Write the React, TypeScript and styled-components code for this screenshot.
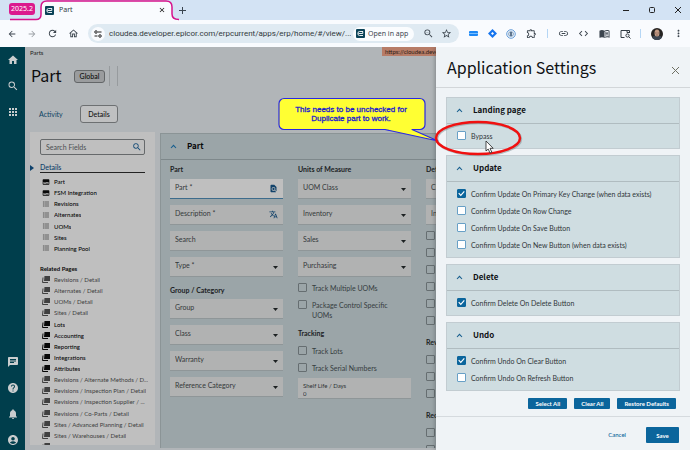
import React from "react";
import styled, { createGlobalStyle, css } from "styled-components";
import {
  MdAccountCircle, MdApps, MdArrowBack, MdArrowForward, MdChat, MdClose, MdCode,
  MdFindInPage, MdFormatListBulleted, MdHelp, MdHome, MdLink, MdMoreVert,
  MdNotifications, MdOutlineExtension, MdOutlineHome, MdRefresh, MdSearch,
  MdStarOutline, MdSubtitles, MdTranslate, MdZoomOut, MdOutlineMenuBook,
} from "react-icons/md";

const uiFont = 'Lato, "Noto Sans", sans-serif';
const headFont = '"Noto Sans CJK SC", "Noto Sans", sans-serif';
const chromeFont = '"Noto Sans", "Open Sans", sans-serif';

const GlobalStyle = createGlobalStyle`
  * { box-sizing: border-box; }
  body { margin: 0; font: 7px/10px ${uiFont}; color: #222; overflow: hidden; }
  button, input, select { font: inherit; color: inherit; margin: 0; padding: 0; border: 0; background: none; border-radius: 0; }
  h1, h2, h3, ul { margin: 0; padding: 0; font: inherit; }
  ul { list-style: none; }
  a { color: inherit; text-decoration: none; }
  svg { display: block; flex: none; }
`;

const Page = styled.div`
  height: 100vh;
  display: flex;
  flex-direction: column;
  overflow: hidden;
`;

/* ---------- browser chrome ---------- */

const TabStrip = styled.header`
  height: 20px;
  flex: none;
  display: flex;
  align-items: center;
  background: #d3e3f4;
  padding-left: 9px;
  font-family: ${chromeFont};
  position: relative;
`;

const TabGroup = styled.span`
  width: 26px;
  height: 12px;
  margin-bottom: 2px;
  border-radius: 3px;
  background: #db1a8e;
  color: #fff;
  font-size: 7px;
  line-height: 11px;
  text-align: center;
  position: relative;
`;

const TabOutline = styled.svg`
  position: absolute;
  left: 9px;
  top: 0;
`;

const BrowserTab = styled.div`
  width: 121px;
  margin-left: 10px;
  display: flex;
  align-items: center;
  gap: 5px;
  position: relative;
  font-size: 7px;
  color: #33383d;
`;

const GhostButton = styled.button`
  display: grid;
  place-items: center;
  color: inherit;
`;

const TabClose = styled(GhostButton)`
  margin-left: auto;
  color: #111;
`;

const NewTab = styled(GhostButton)`
  margin-left: 13px;
  color: #3a4550;
`;

const WindowButtons = styled.div`
  margin-left: auto;
  display: flex;
  gap: 18px;
  padding-right: 8px;
  color: #222;
`;

const Toolbar = styled.div`
  height: 27px;
  flex: none;
  display: flex;
  align-items: center;
  background: #f9fbfe;
  color: #3c454e;
  font-family: ${chromeFont};
  padding: 0 6px 0 7px;
`;

const NavButtons = styled.div`
  display: flex;
  gap: 10px;
  align-items: center;
`;

const AddressBar = styled.div`
  flex: 1;
  min-width: 0;
  height: 19px;
  margin-left: 9px;
  border-radius: 10px;
  background: #dfeaf2;
  display: flex;
  align-items: center;
  padding: 0 7px 0 3px;
`;

const SiteInfo = styled(GhostButton)`
  width: 14px;
  height: 14px;
  border-radius: 50%;
  background: #f9fbfe;
  flex: none;
`;

const Url = styled.input`
  flex: 1;
  min-width: 0;
  margin: 0 2px 0 4px;
  font-family: Roboto, sans-serif;
  font-size: 8px;
  line-height: 14px;
  color: #333a40;
  outline: none;
`;

const OpenInApp = styled.button`
  height: 14px;
  width: 61px;
  flex: none;
  border-radius: 7px;
  background: #fafcfe;
  display: flex;
  align-items: center;
  gap: 3px;
  padding-left: 3px;
  font-size: 7px;
  white-space: nowrap;
  margin-right: 9px;
`;

const BarIcons = styled.div`
  display: flex;
  gap: 7px;
`;

const Extensions = styled.div`
  width: 225px;
  display: flex;
  align-items: center;
  justify-content: space-between;
  padding-left: 10px;
`;

const Divider = styled.i`
  width: 1px;
  height: 9px;
  background: #b5d6f5;
`;

/* ---------- application ---------- */

const AppFrame = styled.div`
  flex: 1;
  min-height: 0;
  display: flex;
  position: relative;
  background: #b1b5b8;
`;

const Rail = styled.nav`
  width: 25px;
  flex: none;
  background: #003e4c;
  color: #c9cdce;
  display: flex;
  flex-direction: column;
  align-items: center;
  justify-content: space-between;
  padding: 7px 0 4px;
`;

const RailGroup = styled.div`
  display: flex;
  flex-direction: column;
  gap: 14px;
`;

const Main = styled.main`
  flex: 1;
  min-width: 0;
  display: flex;
  flex-direction: column;
  padding: 0 0 2px 5px;
`;

const Crumbs = styled.div`
  display: flex;
  height: 12px;
  font-size: 6px;
  line-height: 11px;
`;

const Server = styled.a`
  margin: 0 200px 0 auto;
  height: 9px;
  width: 108px;
  padding-left: 3px;
  background: #b77c67;
  color: #2b1c16;
  line-height: 9px;
  font-size: 6px;
  font-family: ${uiFont};
`;

const TitleRow = styled.div`
  display: flex;
  align-items: center;
  height: 34px;
  color: #0c0c0c;
`;

const PageTitle = styled.h1`
  width: 44px;
  padding: 0 0 3px 1px;
  font-family: ${headFont};
  font-size: 16px;
  line-height: 24px;
`;

const Badge = styled.span`
  height: 13px;
  width: 31px;
  border: 1px solid #636668;
  border-radius: 3px;
  background: #9a9c9e;
  text-align: center;
  line-height: 11px;
  font-weight: 500;
  margin-right: 4px;
`;

const Rule = styled.i`
  height: 20px;
  width: 1px;
  margin-right: 7px;
  background: #979b9e;
`;

const Tabs = styled.div`
  height: 39px;
  display: flex;
  align-items: center;
  padding: 2px 0 0 9px;
  gap: 18px;
`;

const TabButton = styled.button<{ $on?: boolean }>`
  height: 18px;
  ${({ $on }) =>
    $on
      ? css`
          width: 38px;
          border: 1px solid #6d7072;
          border-radius: 3px;
          background: #bfc0c1;
          color: #111;
          font-weight: 500;
        `
      : css`
          width: 23px;
          color: #0d4463;
        `}
`;

const Workspace = styled.div`
  flex: 1;
  min-height: 0;
  display: flex;
  gap: 5px;
`;

const Tree = styled.aside`
  width: 125px;
  flex: none;
  margin-bottom: 3px;
  background: #bfbfbf;
  padding: 7px 10px 0;
  display: flex;
  flex-direction: column;
  overflow: hidden;
`;

const SearchBox = styled.label`
  height: 16px;
  flex: none;
  border: 1px solid #66696b;
  border-radius: 2px;
  display: flex;
  align-items: center;
  padding: 0 2px 0 5px;
  color: #134a76;
`;

const SearchInput = styled.input`
  flex: 1;
  min-width: 0;
  outline: none;
  &::placeholder { color: #4c4f51; opacity: 1; }
`;

const TreeHead = styled.h2`
  height: 18px;
  flex: none;
  margin: 0 0 3px -10px;
  display: flex;
  gap: 6px;
  align-items: center;
  color: #0e416b;
  font-weight: 500;
  span {
    flex: 1;
    height: 18px;
    padding-top: 7px;
    border-bottom: 1px solid #222;
  }
  svg { margin-top: 7px; }
`;

const TreeList = styled.ul<{ $fill?: boolean }>`
  display: flex;
  flex-direction: column;
  justify-content: space-between;
  height: 78px;
  flex: none;
  margin-right: -6px;
  ${({ $fill }) => $fill && css`flex: 1; height: auto; margin-bottom: -7px;`}
`;

const TreeRow = styled.li<{ $dim?: boolean }>`
  height: 11px;
  flex: none;
  line-height: 11px;
  font-size: 6px;
  font-weight: ${({ $dim }) => ($dim ? 400 : 500)};
  color: ${({ $dim }) => ($dim ? "#404040" : "#080808")};
  a {
    display: flex;
    align-items: center;
    gap: 4px;
    padding-left: 2px;
  }
  span {
    overflow: hidden;
    white-space: nowrap;
    text-overflow: ellipsis;
  }
`;

const Related = styled.h3`
  font-size: 6px;
  line-height: 10px;
  flex: none;
  font-weight: 700;
  color: #080808;
  margin: 10px 0 0;
`;

const Panel = styled.section`
  flex: 1;
  min-width: 0;
  margin-top: 1px;
  border: 1px solid #8b9496;
  border-width: 1px 0 0 1px;
  background: #9ba5a8;
  overflow: hidden;
`;

const PanelHead = styled.h2`
  height: 26px;
  border-bottom: 1px solid #7e888b;
  display: flex;
  align-items: center;
  gap: 10px;
  padding: 0 0 1px 9px;
  font-family: ${headFont};
  font-size: 8px;
  line-height: 12px;
  font-weight: 700;
  color: #0a0a0a;
`;

const Columns = styled.div`
  display: flex;
  gap: 15px;
  padding-left: 9px;
`;

const Column = styled.div`
  width: 113px;
  flex: none;
`;

const FieldHead = styled.h3<{ $tall?: boolean }>`
  height: ${({ $tall }) => ($tall ? 22 : 19)}px;
  padding-top: ${({ $tall }) => ($tall ? 8 : 4)}px;
  font-weight: 700;
  color: #1c2224;
  white-space: nowrap;
`;

const Stack = styled.div`
  display: flex;
  flex-direction: column;
  gap: 6px;
`;

const CheckGroup = styled.div`
  padding: 2px 20px 0 0;
`;

const FieldBox = styled.label<{ $focus?: boolean }>`
  position: relative;
  display: block;
  height: 20px;
  background: ${({ $focus }) => ($focus ? "#bfbfbf" : "#b1b2b2")};
  border-bottom: 1px solid ${({ $focus }) => ($focus ? "#3e6c8c" : "#8f9698")};
  input, select {
    appearance: none;
    display: block;
    width: 100%;
    height: 19px;
    padding: 0 5px 4px;
    outline: none;
    color: #34383a;
    opacity: 1;
  }
  input::placeholder { color: #34383a; opacity: 1; }
  svg {
    position: absolute;
    right: 5px;
    top: 5px;
    color: #12426a;
    pointer-events: none;
  }
`;

const NumberBox = styled.label`
  display: block;
  height: 21px;
  margin-top: 2px;
  padding: 4px 5px 0;
  background: #b1b2b2;
  border-bottom: 1px solid #8f9698;
  font-size: 6px;
  line-height: 8px;
  color: #2f3335;
  input {
    display: block;
    width: 100%;
    height: 8px;
  }
`;

const Check = styled.label<{ $dim?: boolean; $top?: boolean }>`
  display: flex;
  align-items: ${({ $top }) => ($top ? "flex-start" : "center")};
  gap: 5px;
  min-height: 17px;
  padding-top: ${({ $top }) => ($top ? 4 : 0)}px;
  color: ${({ $dim }) => ($dim ? "#363d3f" : "#30363a")};
  input {
    appearance: none;
    flex: none;
    width: 9px;
    height: 9px;
    border: 1px solid ${({ $dim }) => ($dim ? "#666e71" : "#68a0c6")};
    border-radius: 1px;
    background: ${({ $dim }) => ($dim ? "transparent" : "#fff")};
  }
  input:checked {
    border-color: #0b659c;
    background: #0b659c;
  }
  input:checked::before {
    content: "";
    display: block;
    width: 7px;
    height: 7px;
    background: #fff;
    clip-path: polygon(4% 50%, 16% 38%, 40% 64%, 84% 14%, 96% 26%, 40% 88%);
  }
`;

/* ---------- settings drawer ---------- */

const Drawer = styled.aside`
  position: absolute;
  top: 0;
  right: 0;
  bottom: 0;
  width: 254px;
  display: flex;
  flex-direction: column;
  background: #eff3f6;
  box-shadow: -1px 0 4px rgba(60, 65, 70, 0.4);
  clip-path: inset(0 0 0 -6px);
`;

const DrawerHead = styled.header`
  height: 41px;
  flex: none;
  border-bottom: 1px solid #d2d6d9;
  display: flex;
  align-items: center;
  justify-content: space-between;
  padding: 0 10px 0 11px;
  h1 {
    padding-bottom: 1px;
    font-family: ${headFont};
    font-size: 16px;
    line-height: 24px;
    color: #101214;
    white-space: nowrap;
  }
  button { margin-top: 6px; }
`;

const DrawerBody = styled.div`
  flex: 1;
  min-height: 0;
  overflow: hidden;
  padding: 9px 10px 0;
  display: flex;
  flex-direction: column;
  gap: 6px;
`;

const Card = styled.section`
  border: 1px solid #c2ccd1;
  background: #cfdde1;
  flex: none;
`;

const CardHead = styled.h2`
  height: 26px;
  border-bottom: 1px solid #b0bcc0;
  display: flex;
  align-items: center;
  gap: 10px;
  padding: 0 0 1px 9px;
  font-family: ${headFont};
  font-size: 8px;
  line-height: 12px;
  font-weight: 700;
  color: #101214;
`;

const CardBody = styled.div`
  padding: 3px 10px 4px;
`;

const Actions = styled.div`
  display: flex;
  justify-content: flex-end;
  gap: 7px;
  padding: 1px 4px 0 0;
`;

const Small = styled.button`
  height: 11px;
  padding: 0 7px;
  border-radius: 1px;
  background: #0b659c;
  color: #fff;
  font-size: 6px;
  line-height: 11px;
  font-weight: 700;
`;

const DrawerFoot = styled.footer`
  height: 34px;
  flex: none;
  border-top: 1px solid #d5dade;
  display: flex;
  align-items: center;
  justify-content: flex-end;
  gap: 20px;
  padding: 3px 11px 0 0;
  font-size: 6px;
`;

const Cancel = styled.button`
  color: #0b659c;
  font-weight: 500;
`;

const Save = styled(Small)`
  width: 33px;
  height: 16px;
  padding: 0;
`;

/* ---------- notes drawn over the page ---------- */

const Notes = styled.div`
  position: absolute;
  top: 48px;
  right: 165px;
  width: 250px;
  height: 64px;
  pointer-events: none;
  svg { position: absolute; inset: 0; }
`;

const NoteText = styled.p`
  position: absolute;
  left: 3px;
  top: 10px;
  width: 146px;
  margin: 0;
  text-align: center;
  color: #1b1bd0;
  font: 8px/9px "Liberation Sans", Arial, sans-serif;
  -webkit-text-stroke: 0.3px #1b1bd0;
`;

/* ---------- drawings ---------- */

const AppLogo = () => (
  <svg width="9" height="9" viewBox="0 0 18 18">
    <rect width="18" height="18" rx="2" fill="#0b4358" />
    <path d="M14 5H7a3 3 0 0 0-3 3v2a3 3 0 0 0 3 3h7M5 9h8.500V5" fill="none" stroke="#fff" strokeWidth="1.800" />
  </svg>
);

const Chevron = () => (
  <svg width="7" height="7" viewBox="0 0 7 7">
    <path d="M1 5 3.500 2.300 6 5" fill="none" stroke="#175e8e" strokeWidth="1.100" />
  </svg>
);

const Arrow = () => (
  <svg width="5" height="12" viewBox="0 0 5 12">
    <path d="M0 4h5L2.500 7z" fill="#1d2122" />
  </svg>
);

const PagesIcon = () => (
  <svg width="8" height="7" viewBox="0 0 16 14">
    <path d="M5 0h11v10H4z" fill="currentColor" />
    <path d="M2 3 1 13h11" fill="none" stroke="currentColor" strokeWidth="2" />
  </svg>
);

const TuneIcon = () => (
  <svg width="8" height="8" viewBox="0 0 16 16" fill="none" stroke="#222" strokeWidth="2">
    <circle cx="4" cy="4" r="2.500" /><path d="M8 4h7M1 12h6" /><circle cx="12" cy="12" r="2.500" />
  </svg>
);

const TabSearchIcon = () => (
  <svg width="11" height="10" viewBox="0 0 22 20" fill="none" stroke="#333c44" strokeWidth="2">
    <path d="M9 17H2V3h17v5M14 3v4h5" /><circle cx="15" cy="13" r="3.200" /><path d="m17.500 15.500 3.500 3.500" />
  </svg>
);

const Avatar = () => (
  <svg width="12" height="12" viewBox="0 0 24 24">
    <circle cx="12" cy="12" r="12" fill="#262322" />
    <path d="M2 19c3-4 6-4 10-4s7 0 10 4a12 12 0 0 1-20 0" fill="#3c4653" />
    <ellipse cx="12" cy="10" rx="5" ry="7" fill="#c39b86" />
    <path d="M8 10h3m2 0h3M10 14h4" stroke="#5b3f35" />
  </svg>
);

/* ---------- pieces ---------- */

function SelectField({ label }: { label: string }) {
  return (
    <FieldBox>
      <select aria-label={label}><option>{label}</option></select>
      <Arrow />
    </FieldBox>
  );
}

function TextField({ label, focus, icon }: { label: string; focus?: boolean; icon?: React.ReactNode }) {
  return (
    <FieldBox $focus={focus}>
      <input type="text" aria-label={label} placeholder={label} />
      {icon}
    </FieldBox>
  );
}

function SettingsCard({ title, items }: { title: string; items: [string, boolean][] }) {
  return (
    <Card>
      <CardHead><Chevron />{title}</CardHead>
      <CardBody>
        {items.map(([text, on]) => (
          <Check key={text}><input type="checkbox" defaultChecked={on} />{text}</Check>
        ))}
      </CardBody>
    </Card>
  );
}

const detailRows = ["Part", "FSM Integration", "Revisions", "Alternates", "UOMs", "Sites", "Planning Pool"];

const relatedRows: [string, boolean][] = [
  ["Revisions / Detail", true], ["Alternates / Detail", true], ["UOMs / Detail", true],
  ["Sites / Detail", true], ["Lots", false], ["Accounting", false], ["Reporting", false],
  ["Integrations", false], ["Attributes", false],
  ["Revisions / Alternate Methods / D...", true], ["Revisions / Inspection Plan / Detail", true],
  ["Revisions / Inspection Supplier / ...", true], ["Revisions / Co-Parts / Detail", true],
  ["Sites / Advanced Planning / Detail", true], ["Sites / Warehouses / Detail", true],
  ["Accounting / Tax Exemptions / D...", true],
];

const blankChecks = (name: string, count: number) =>
  Array.from({ length: count }, (_, i) => (
    <Check $dim key={name + i}><input type="checkbox" aria-label={`${name} ${i + 1}`} /></Check>
  ));

export default function App() {
  return (
    <Page>
      <GlobalStyle />
      <TabStrip>
        <TabOutline width="172" height="21" viewBox="0 0 172 21">
          <path d="M1 19.500h26c4 0 5-2 5-5V7c0-4 2-6 6-6h119c4 0 6 2 6 6v8c0 3 2 5 6 5v1H30z" fill="#f9fbfe" />
          <path d="M1 19.500h26c4 0 5-2 5-5V7c0-4 2-6 6-6h119c4 0 6 2 6 6v7c0 4 2 5.500 7 5.500" fill="none" stroke="#d6138b" strokeWidth="1.500" />
        </TabOutline>
        <TabGroup>2025.2</TabGroup>
        <BrowserTab><AppLogo />Part<TabClose aria-label="Close tab"><MdClose size={8} /></TabClose></BrowserTab>
        <NewTab aria-label="New tab">
          <svg width="7" height="7" viewBox="0 0 7 7"><path d="M3.500 0v7M0 3.500h7" stroke="currentColor" /></svg>
        </NewTab>
        <WindowButtons>
          <GhostButton aria-label="Minimize"><svg width="8" height="8"><path d="M1 4.500h6" stroke="currentColor" /></svg></GhostButton>
          <GhostButton aria-label="Maximize"><svg width="8" height="8"><rect x="1.500" y="1.500" width="5" height="5" rx="1" fill="none" stroke="currentColor" /></svg></GhostButton>
          <GhostButton aria-label="Close"><svg width="8" height="8"><path d="m1 1 6 6M7 1 1 7" stroke="currentColor" /></svg></GhostButton>
        </WindowButtons>
      </TabStrip>

      <Toolbar>
        <NavButtons>
          <GhostButton aria-label="Back"><MdArrowBack size={10} /></GhostButton>
          <GhostButton aria-label="Forward"><MdArrowForward size={10} color="#9a9fa4" /></GhostButton>
          <GhostButton aria-label="Reload"><MdRefresh size={11} /></GhostButton>
          <GhostButton aria-label="Home"><MdOutlineHome size={11} /></GhostButton>
        </NavButtons>
        <AddressBar>
          <SiteInfo aria-label="Site information"><TuneIcon /></SiteInfo>
          <Url aria-label="Address" defaultValue="cloudea.developer.epicor.com/erpcurrent/apps/erp/home/#/view/..." />
          <OpenInApp><AppLogo />Open in app</OpenInApp>
          <BarIcons>
            <GhostButton aria-label="Zoom"><MdZoomOut size={11} /></GhostButton>
            <GhostButton aria-label="Bookmark"><MdStarOutline size={11} /></GhostButton>
          </BarIcons>
        </AddressBar>
        <Extensions>
          <svg width="9" height="7"><rect y="1" width="9" height="5" rx="1" fill="#1e88f5" /><path d="M0 3.500h9" stroke="#7cc0ff" /></svg>
          <svg width="9" height="9" viewBox="0 0 18 18"><path d="m9 0 9 9-9 9-9-9z" fill="#1574ee" /><path d="m9 6 3 3-3 3-3-3z" fill="#fff" /></svg>
          <svg width="10" height="10" viewBox="0 0 20 20"><circle cx="10" cy="10" r="8.500" fill="#fff" stroke="#5c96d6" strokeWidth="2" /><circle cx="10" cy="10" r="5" fill="#dce9f5" stroke="#305f8f" /><path d="M10 6v8" stroke="#173350" strokeWidth="2.500" /></svg>
          <MdOutlineExtension size={11} />
          <Divider />
          <MdLink size={11} />
          <MdCode size={11} />
          <MdOutlineMenuBook size={11} />
          <TabSearchIcon />
          <Divider />
          <Avatar />
          <MdMoreVert size={11} />
        </Extensions>
      </Toolbar>

      <AppFrame>
        <Rail>
          <RailGroup><MdHome size={12} /><MdSearch size={12} /><MdApps size={12} /></RailGroup>
          <RailGroup><MdChat size={12} /><MdHelp size={12} /><MdNotifications size={12} /><MdAccountCircle size={12} /></RailGroup>
        </Rail>

        <Main>
          <Crumbs>Parts<Server href="#">https://cloudea.developer.epicor</Server></Crumbs>
          <TitleRow><PageTitle>Part</PageTitle><Badge>Global</Badge><Rule /><Rule /></TitleRow>
          <Tabs><TabButton>Activity</TabButton><TabButton $on>Details</TabButton></Tabs>
          <Workspace>
            <Tree>
              <SearchBox><SearchInput type="text" aria-label="Search Fields" placeholder="Search Fields" /><MdSearch size={10} /></SearchBox>
              <TreeHead>
                <svg width="4" height="6"><path d="m0 0 4 3-4 3z" fill="#0e416b" /></svg><span>Details</span>
              </TreeHead>
              <TreeList>
                {detailRows.map((t, i) => (
                  <TreeRow key={t}><a href="#">{i < 2 ? <MdSubtitles size={8} /> : <MdFormatListBulleted size={8} />}<span>{t}</span></a></TreeRow>
                ))}
              </TreeList>
              <Related>Related Pages</Related>
              <TreeList $fill>
                {relatedRows.map(([t, dim]) => (
                  <TreeRow key={t} $dim={dim}><a href="#"><PagesIcon /><span>{t}</span></a></TreeRow>
                ))}
              </TreeList>
            </Tree>

            <Panel>
              <PanelHead><Chevron />Part</PanelHead>
              <Columns>
                <Column>
                  <FieldHead>Part</FieldHead>
                  <Stack>
                    <TextField label="Part *" focus icon={<MdFindInPage size={9} />} />
                    <TextField label="Description *" icon={<MdTranslate size={9} />} />
                    <TextField label="Search" />
                    <SelectField label="Type *" />
                  </Stack>
                  <FieldHead $tall>Group / Category</FieldHead>
                  <Stack>
                    <SelectField label="Group" />
                    <SelectField label="Class" />
                    <SelectField label="Warranty" />
                    <SelectField label="Reference Category" />
                  </Stack>
                </Column>
                <Column>
                  <FieldHead>Units of Measure</FieldHead>
                  <Stack>
                    <SelectField label="UOM Class" />
                    <SelectField label="Inventory" />
                    <SelectField label="Sales" />
                    <SelectField label="Purchasing" />
                  </Stack>
                  <CheckGroup>
                    <Check $dim $top><input type="checkbox" />Track Multiple UOMs</Check>
                    <Check $dim $top><input type="checkbox" />Package Control Specific UOMs</Check>
                  </CheckGroup>
                  <FieldHead $tall>Tracking</FieldHead>
                  <Check $dim><input type="checkbox" />Track Lots</Check>
                  <Check $dim><input type="checkbox" />Track Serial Numbers</Check>
                  <NumberBox>Shelf Life / Days<input type="text" defaultValue="0" /></NumberBox>
                </Column>
                <Column>
                  <FieldHead>Defaults</FieldHead>
                  <Stack><SelectField label="Class" /><SelectField label="Inventory" /></Stack>
                  <CheckGroup>{blankChecks("Default", 6)}</CheckGroup>
                  <FieldHead $tall>Revisions</FieldHead>
                  {blankChecks("Revision", 3)}
                  <FieldHead $tall>Receiving</FieldHead>
                  {blankChecks("Receiving", 2)}
                </Column>
              </Columns>
            </Panel>
          </Workspace>
        </Main>

        <Drawer>
          <DrawerHead>
            <h1>Application Settings</h1>
            <GhostButton aria-label="Close settings">
              <svg width="9" height="9"><path d="m1 1 7 7M8 1 1 8" stroke="#6f7063" /></svg>
            </GhostButton>
          </DrawerHead>
          <DrawerBody>
            <SettingsCard title="Landing page" items={[["Bypass", false]]} />
            <SettingsCard title="Update" items={[
              ["Confirm Update On Primary Key Change (when data exists)", true],
              ["Confirm Update On Row Change", false],
              ["Confirm Update On Save Button", false],
              ["Confirm Update On New Button (when data exists)", false],
            ]} />
            <SettingsCard title="Delete" items={[["Confirm Delete On Delete Button", true]]} />
            <SettingsCard title="Undo" items={[["Confirm Undo On Clear Button", true], ["Confirm Undo On Refresh Button", false]]} />
            <Actions><Small>Select All</Small><Small>Clear All</Small><Small>Restore Defaults</Small></Actions>
          </DrawerBody>
          <DrawerFoot><Cancel>Cancel</Cancel><Save>Save</Save></DrawerFoot>
        </Drawer>

        <Notes>
          <svg width="250" height="64" viewBox="0 0 250 64">
            <path d="M9 3.500h136a5 5 0 0 1 5 5v21a5 5 0 0 1-5 5h-8L163 46 110 34.500H9a5 5 0 0 1-5-5v-21a5 5 0 0 1 5-5z" fill="#ffff33" stroke="#2a2ae0" strokeWidth="1.200" strokeLinejoin="round" />
            <ellipse cx="204" cy="44" rx="42" ry="16" fill="none" stroke="#7a8c90" strokeOpacity=".5" strokeWidth="2.500" />
            <ellipse cx="203" cy="43" rx="42" ry="16" fill="none" stroke="#f01010" strokeWidth="2.500" />
            <path d="M211 46v10l2.200-2 1.800 4 1.800-.8-1.800-3.900h3.200z" fill="#fff" stroke="#222" strokeWidth=".8" />
          </svg>
          <NoteText>This needs to be unchecked for<br />Duplicate part to work.</NoteText>
        </Notes>
      </AppFrame>
    </Page>
  );
}
